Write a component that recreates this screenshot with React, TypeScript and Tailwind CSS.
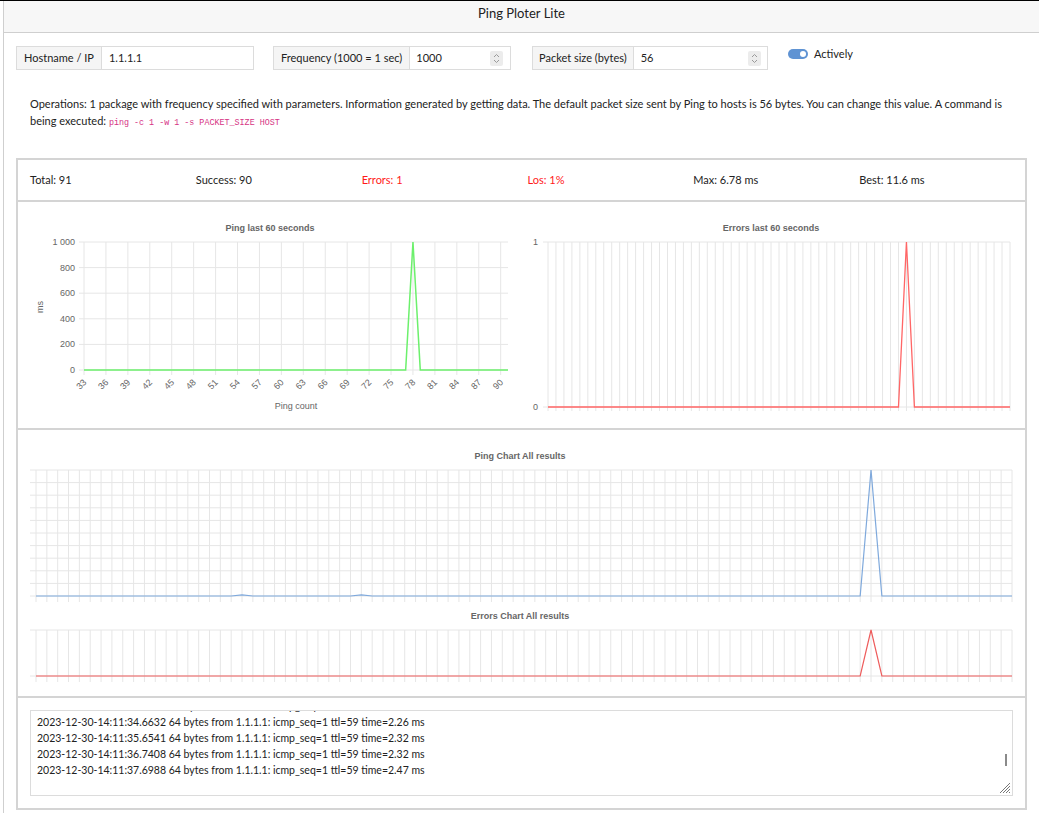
import React from "react";

const GRID = "#e6e6e6";
const TICK = "#666";

function range(n: number) {
  return Array.from({ length: n }, (_, i) => i);
}

function Spinner() {
  return (
    <span className="flex h-[15px] w-[13px] flex-col items-center justify-center rounded-[2px] bg-[#ececec]">
      <svg width="7" height="11" viewBox="0 0 7 11" fill="none" stroke="#9a9a9a" strokeWidth="1">
        <path d="M1 4 L3.5 1.5 L6 4" />
        <path d="M1 7 L3.5 9.5 L6 7" />
      </svg>
    </span>
  );
}

function PingLast60() {
  const x0 = 84, x1 = 508, y0 = 242, y1 = 370;
  const dx = (x1 - x0) / 58;
  const yTicks = [1000, 800, 600, 400, 200, 0];
  const pts = range(59)
    .map((i) => `${x0 + i * dx},${i === 45 ? y0 : y1}`)
    .join(" ");
  return (
    <svg width={501} height={226} viewBox="18 202 501 226" className="block" fontFamily="'Liberation Sans', Arial, sans-serif">
      <text x={270} y={231} textAnchor="middle" fontSize={9} fontWeight={700} fill={TICK}>
        Ping last 60 seconds
      </text>
      {yTicks.map((v) => {
        const y = y1 - (v / 1000) * (y1 - y0);
        return (
          <g key={v}>
            <line x1={79} x2={x1} y1={y} y2={y} stroke={GRID} />
            <text x={75} y={y + 3} textAnchor="end" fontSize={9} fill={TICK}>
              {v === 1000 ? "1 000" : v}
            </text>
          </g>
        );
      })}
      {range(20).map((k) => {
        const x = x0 + k * 3 * dx;
        return (
          <g key={k}>
            <line x1={x} x2={x} y1={y0} y2={375} stroke={GRID} />
            <text
              x={x + 3}
              y={383}
              textAnchor="end"
              fontSize={9}
              fill={TICK}
              transform={`rotate(-45 ${x + 3} ${383})`}
            >
              {33 + k * 3}
            </text>
          </g>
        );
      })}
      <text x={43} y={307} textAnchor="middle" fontSize={9} fill={TICK} transform="rotate(-90 43 307)">
        ms
      </text>
      <text x={296} y={409} textAnchor="middle" fontSize={9} fill={TICK}>
        Ping count
      </text>
      <polyline points={pts} fill="none" stroke="#6cf06c" strokeWidth={1.5} />
    </svg>
  );
}

function ErrorsLast60() {
  const x0 = 548, x1 = 1010, y0 = 242, y1 = 407;
  const dx = (x1 - x0) / 58;
  const pts = range(59)
    .map((i) => `${x0 + i * dx},${i === 45 ? y0 : y1}`)
    .join(" ");
  return (
    <svg width={506} height={226} viewBox="519 202 506 226" className="block" fontFamily="'Liberation Sans', Arial, sans-serif">
      <text x={771} y={231} textAnchor="middle" fontSize={9} fontWeight={700} fill={TICK}>
        Errors last 60 seconds
      </text>
      {range(59).map((i) => (
        <line key={i} x1={x0 + i * dx} x2={x0 + i * dx} y1={y0} y2={411} stroke={GRID} />
      ))}
      <line x1={543} x2={x1} y1={y0} y2={y0} stroke={GRID} />
      <line x1={543} x2={x1} y1={y1} y2={y1} stroke={GRID} />
      <text x={538} y={245} textAnchor="end" fontSize={9} fill={TICK}>1</text>
      <text x={538} y={410} textAnchor="end" fontSize={9} fill={TICK}>0</text>
      <polyline points={pts} fill="none" stroke="#ff6666" strokeWidth={1.3} />
    </svg>
  );
}

function PingAll() {
  const x0 = 36, x1 = 1012, y0 = 470, y1 = 596;
  const dx = (x1 - x0) / 90;
  const dy = (y1 - y0) / 10;
  const val = (i: number) => (i === 77 ? y0 : i === 19 || i === 30 ? y1 - 1.2 : y1);
  const pts = range(91)
    .map((i) => `${x0 + i * dx},${val(i)}`)
    .join(" ");
  return (
    <svg width={1007} height={176} viewBox="18 430 1007 176" className="block" fontFamily="'Liberation Sans', Arial, sans-serif">
      <text x={520} y={459} textAnchor="middle" fontSize={9} fontWeight={700} fill={TICK}>
        Ping Chart All results
      </text>
      {range(11).map((k) => (
        <line key={k} x1={30} x2={x1} y1={y0 + k * dy} y2={y0 + k * dy} stroke={GRID} />
      ))}
      {range(91).map((i) => (
        <line key={i} x1={x0 + i * dx} x2={x0 + i * dx} y1={y0} y2={602} stroke={GRID} />
      ))}
      <polyline points={pts} fill="none" stroke="#7fa9dc" strokeWidth={1.2} />
    </svg>
  );
}

function ErrorsAll() {
  const x0 = 36, x1 = 1012, y0 = 630, y1 = 676;
  const dx = (x1 - x0) / 90;
  const pts = range(91)
    .map((i) => `${x0 + i * dx},${i === 77 ? y0 : y1}`)
    .join(" ");
  return (
    <svg width={1007} height={90} viewBox="18 606 1007 90" className="block" fontFamily="'Liberation Sans', Arial, sans-serif">
      <text x={520} y={619} textAnchor="middle" fontSize={9} fontWeight={700} fill={TICK}>
        Errors Chart All results
      </text>
      <line x1={30} x2={x1} y1={y0} y2={y0} stroke={GRID} />
      <line x1={30} x2={x1} y1={y1} y2={y1} stroke={GRID} />
      {range(91).map((i) => (
        <line key={i} x1={x0 + i * dx} x2={x0 + i * dx} y1={y0} y2={682} stroke={GRID} />
      ))}
      <polyline points={pts} fill="none" stroke="#ee5c5c" strokeWidth={1.2} />
    </svg>
  );
}

const logLines = [
  "2023-12-30-14:11:33.6590 64 bytes from 1.1.1.1: icmp_seq=1 ttl=59 time=2.31 ms",
  "2023-12-30-14:11:34.6632 64 bytes from 1.1.1.1: icmp_seq=1 ttl=59 time=2.26 ms",
  "2023-12-30-14:11:35.6541 64 bytes from 1.1.1.1: icmp_seq=1 ttl=59 time=2.32 ms",
  "2023-12-30-14:11:36.7408 64 bytes from 1.1.1.1: icmp_seq=1 ttl=59 time=2.32 ms",
  "2023-12-30-14:11:37.6988 64 bytes from 1.1.1.1: icmp_seq=1 ttl=59 time=2.47 ms",
];

export default function App() {
  return (
    <div className="min-h-[813px] border-t border-black bg-white font-['Lato','Open_Sans',sans-serif] text-[11px] text-[#222]">
      <div className="ml-[3px] min-h-[812px] border-l border-[#cfcfcf]">
        <div className="flex h-[32px] justify-center border-b border-[#cfcfcf] bg-[#f7f7f7] pt-[3px] text-[13px] leading-[18px] text-[#222]">
          Ping Ploter Lite
        </div>

        <div className="ml-[12px] mt-[13px] flex items-start">
          <div className="flex h-[24px] w-[238px]">
            <span className="flex items-center border border-[#dcdcdc] bg-[#f5f5f5] px-[7px]">Hostname / IP</span>
            <span className="flex flex-1 items-center border border-l-0 border-[#dcdcdc] px-[7px]">1.1.1.1</span>
          </div>
          <div className="ml-[19px] flex h-[24px] w-[238px]">
            <span className="flex items-center border border-[#dcdcdc] bg-[#f5f5f5] px-[7px]">Frequency (1000 = 1 sec)</span>
            <span className="flex flex-1 items-center justify-between border border-l-0 border-[#dcdcdc] pl-[6px] pr-[7px]">
              1000
              <Spinner />
            </span>
          </div>
          <div className="ml-[21px] flex h-[24px] w-[236px]">
            <span className="flex items-center border border-[#dcdcdc] bg-[#f5f5f5] px-[6px]">Packet size (bytes)</span>
            <span className="flex flex-1 items-center justify-between border border-l-0 border-[#dcdcdc] pl-[7px] pr-[6px]">
              56
              <Spinner />
            </span>
          </div>
          <div className="ml-[20px] flex h-[15px] items-center gap-[6px] leading-[15px]">
            <span className="flex h-[10px] w-[20px] items-center justify-end rounded-full bg-[#5f93d3] pr-[2px]">
              <span className="h-[6px] w-[6px] rounded-full bg-white" />
            </span>
            <span>Actively</span>
          </div>
        </div>

        <p className="ml-[26px] mt-[25px] w-[990px] leading-[17px]">
          Operations: 1 package with frequency specified with parameters. Information generated by getting data. The
          default packet size sent by Ping to hosts is 56 bytes. You can change this value. A command is being executed:{" "}
          <code className="font-['Liberation_Mono',monospace] text-[8.4px] leading-[10px] text-[#d63384]">
            ping -c 1 -w 1 -s PACKET_SIZE HOST
          </code>
        </p>

        <div className="ml-[12px] mt-[29px] w-[1011px] border-2 border-[#d4d4d4]">
          <div className="flex h-[42px] items-center border-b-2 border-[#d4d4d4] pl-[12px]">
            <span className="w-[167.4px]">Total: 91</span>
            <span className="w-[167.4px]">Success: 90</span>
            <span className="w-[167.4px] text-[#ff1a1a]">Errors: 1</span>
            <span className="w-[167.4px] text-[#ff1a1a]">Los: 1%</span>
            <span className="w-[167.4px]">Max: 6.78 ms</span>
            <span className="w-[167.4px]">Best: 11.6 ms</span>
          </div>

          <div className="flex border-b-2 border-[#d4d4d4]">
            <PingLast60 />
            <ErrorsLast60 />
          </div>

          <div className="border-b-2 border-[#d4d4d4]">
            <PingAll />
            <ErrorsAll />
          </div>

          <div className="px-[12px] py-[12px]">
            <div className="relative h-[86px] overflow-hidden border border-[#dcdcdc]">
              <div className="-mt-[13px] pl-[6px] text-[10.5px] leading-[16px]">
                {logLines.map((l) => (
                  <div key={l}>{l}</div>
                ))}
              </div>
              <span className="absolute right-[5px] top-[43px] h-[12px] w-[2px] bg-[#8a8a8a]" />
              <svg className="absolute bottom-[1px] right-[1px]" width="14" height="14" viewBox="0 0 14 14" stroke="#777" strokeWidth="1">
                <path d="M13 3 L3 13" />
                <path d="M13 6 L6 13" />
                <path d="M13 9 L9 13" />
                <path d="M13 12 L12 13" />
              </svg>
            </div>
          </div>
        </div>
      </div>
    </div>
  );
}
